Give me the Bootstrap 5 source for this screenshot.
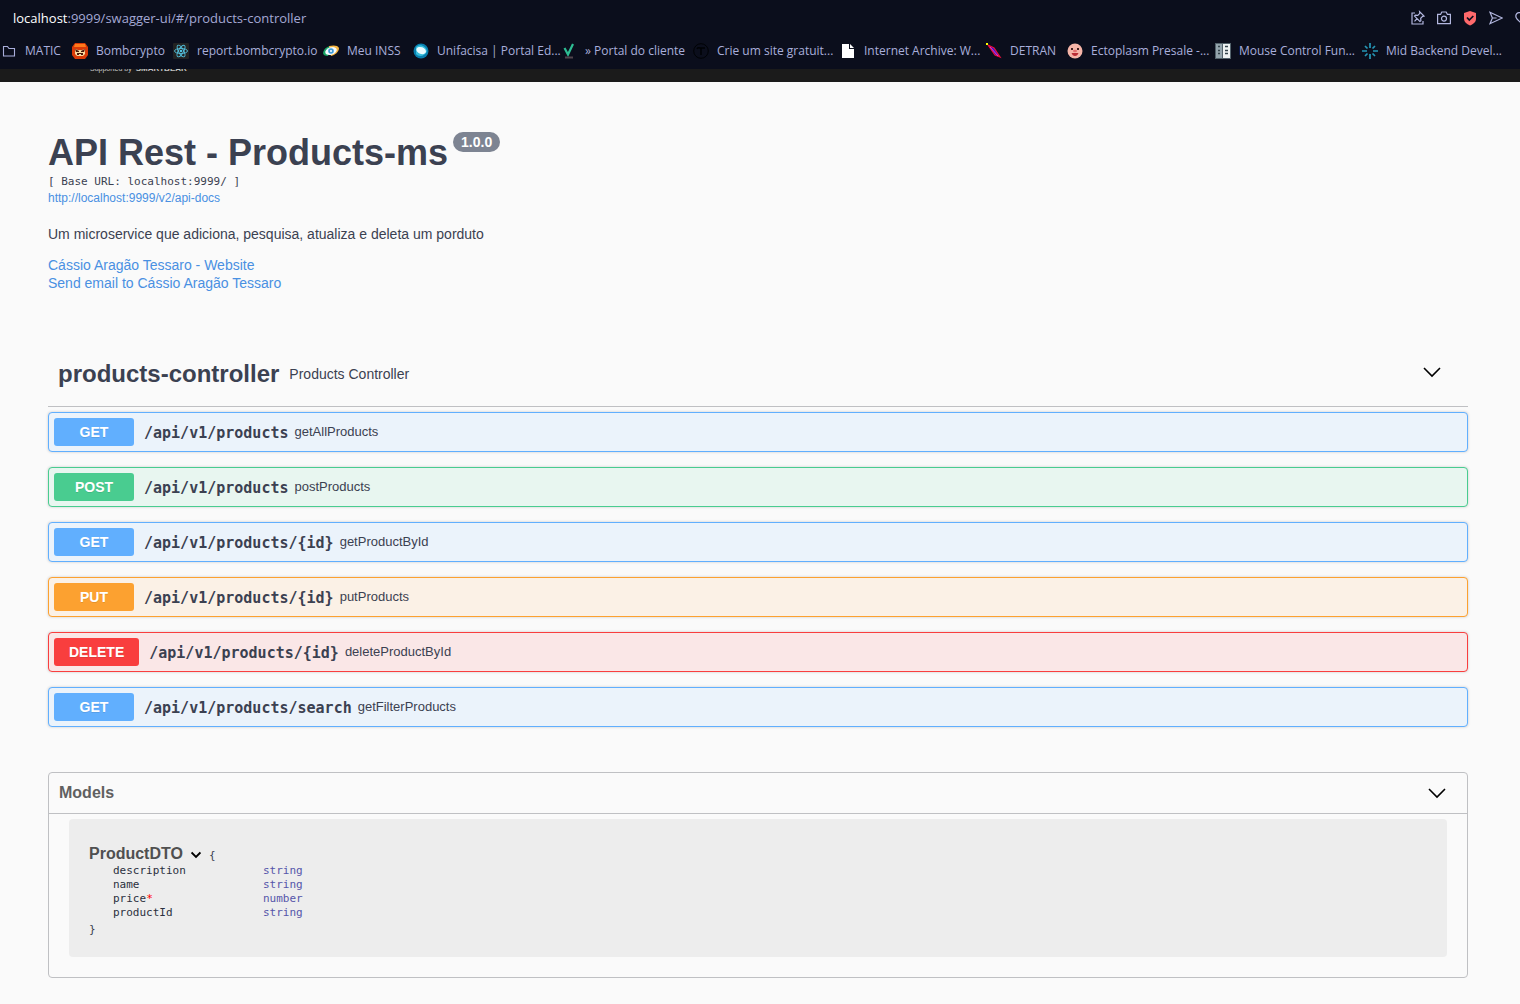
<!DOCTYPE html>
<html lang="pt-BR">
<head>
<meta charset="utf-8">
<meta name="viewport" content="width=device-width, initial-scale=1">
<title>Swagger UI</title>
<link href="https://cdn.jsdelivr.net/npm/bootstrap@5.3.0/dist/css/bootstrap.min.css" rel="stylesheet">
<style>
  body { background: #fafafa; color: #3b4151; font-family: "Liberation Sans", Arial, sans-serif; font-size: 14px; line-height: 18px; }
  a { text-decoration: none; }
  .chrome { background: #0b0e1c; font-family: "Open Sans", "Noto Sans", sans-serif; }
  .address { height: 36px; padding-left: 13px; color: #a4a8d4; font-size: 13px; overflow: hidden; }
  .address strong { color: #fff; font-weight: 400; }
  .tools { gap: 12px; width: 109px; overflow: hidden; }
  .tools button { width: 14px; height: 18px; padding: 0; border: 0; background: none; color: #b4b8e0; line-height: 0; }
  .tools svg { display: block; width: 14px; height: 18px; }
  .bookmarks { display: grid; grid-template-columns: 71px 101px 150px 90px 148px 132px 147px 146px 81px 148px 147px 1fr; align-items: center; height: 33px; padding: 0 0 3px 1px; }
  .bookmarks a { gap: 8px; color: #a9aedb; font-size: 12px; line-height: 16px; white-space: nowrap; }
  .bookmarks svg { width: 16px; height: 16px; flex: none; }
  .topbar { height: 13px; background: #1b1b1b; color: #c4c4c4; padding-left: 90px; gap: 4px; overflow: hidden; font-size: 7px; line-height: 10px; }
  .topbar span { margin-top: -5px; }
  .topbar .brand { font-size: 8px; font-weight: 700; }
  .page { padding: 50px 52px 26px 48px; }
  h1 { font-size: 36px; line-height: 40px; font-weight: 700; color: #3b4151; margin: 1px 5px 0 0; }
  .version { background: #7d8492; color: #fff; font-size: 14px; font-weight: 700; line-height: 20px; padding: 0 8px; border-radius: 20px; }
  .mono { font-family: "DejaVu Sans Mono", monospace; font-size: 11px; line-height: 14px; }
  .base-url { padding-top: 2px; }
  .info a { color: #4990e2; }
  .info .spec { font-size: 12px; line-height: 18px; }
  .info p { margin: 18px 0 13px; }
  .tag-section { padding-top: 69px; }
  .tag-head { gap: 10px; padding: 0 26px 19px 10px; border-bottom: 1px solid #bfc0c3; }
  .tag-head h2 { font-size: 24px; line-height: 26px; font-weight: 700; }
  .summary { font-size: 13px; }
  .toggle { border: 0; background: none; padding: 0; line-height: 0; color: #000; }
  .ops { padding-top: 5px; gap: 15px; }
  .op { height: 40px; padding: 5px; gap: 6px; border: 1px solid var(--c); background: var(--bg); border-radius: 4px; box-shadow: 0 0 3px rgba(0,0,0,.19); color: #3b4151; text-align: left; }
  .op .verb { min-width: 80px; margin-right: 4px; padding: 0 15px; line-height: 28px; border-radius: 3px; background: var(--c); color: #fff; font-weight: 700; text-align: center; text-shadow: 0 1px 0 rgba(0,0,0,.1); }
  .op .path { font-family: "DejaVu Sans Mono", monospace; font-size: 15px; font-weight: 700; padding-top: 2px; }
  .get { --c: #61affe; --bg: #ebf3fb; }
  .post { --c: #49cc90; --bg: #e8f6f0; }
  .put { --c: #fca130; --bg: #fbf1e6; }
  .delete { --c: #f93e3e; --bg: #fae7e7; }
  .models { margin-top: 45px; border: 1px solid #bfc0c3; border-radius: 4px; padding-bottom: 20px; }
  .models-head { height: 41px; padding: 0 20px 0 10px; border-bottom: 1px solid #bfc0c3; }
  .models h2 { font-size: 16px; line-height: 20px; font-weight: 700; color: #606060; }
  .model { margin: 5px 20px 0; padding: 25px 20px 20px; background: #ededed; border-radius: 4px; }
  .model h3 { font-family: "Liberation Sans", Arial, sans-serif; font-size: 16px; line-height: 20px; font-weight: 700; color: #505050; }
  .model .brace { padding-top: 3px; }
  .model table { margin-left: 24px; }
  .model th { width: 150px; padding: 0; font-weight: 400; color: #2b3040; }
  .model td { padding: 0; color: #55a; }
  .required { color: #f00; }
</style>
<script src="https://cdn.jsdelivr.net/npm/bootstrap@5.3.0/dist/js/bootstrap.bundle.min.js"></script>
</head>
<body>
<header class="chrome">
  <div class="address d-flex align-items-center justify-content-between">
    <div><strong>localhost</strong>:9999/swagger-ui/#/products-controller</div>
    <div class="tools d-flex flex-shrink-0">
      <button type="button" aria-label="Pin page"><svg viewBox="0 0 14 18" fill="none" stroke="currentColor" stroke-width="1.2"><path d="M4 4H1v11h11v-3M8.600 2.600l4.400 4.400-1.300.3-2 2 .2 2.400-1 .8-5.400-5.400.9-1 2.400.2 2-2zM6.200 9.500 3.500 12.300"/></svg></button>
      <button type="button" aria-label="Snapshot"><svg viewBox="0 0 14 18" fill="none" stroke="currentColor" stroke-width="1.200"><path d="M.6 5.400h3L4.800 3h4.400l1.200 2.400h3v9.200H.6z"/><circle cx="7" cy="9.600" r="2.500"/></svg></button>
      <button type="button" aria-label="Blocker"><svg viewBox="0 0 14 18"><path fill="#ff696b" d="M7 2l6 2v6c0 3-2.500 5-6 6.500C3.500 15 1 13 1 10V4z"/><path fill="none" stroke="#0b0e1c" stroke-width="1.700" d="M4 8.500 6.300 11 10.300 7"/></svg></button>
      <button type="button" aria-label="Send"><svg viewBox="0 0 14 18" fill="none" stroke="currentColor" stroke-width="1.200"><path d="M1 3.300 13.300 9 1 14.700 3.400 9zM3.400 9h4.200"/></svg></button>
      <button type="button" aria-label="Favourite" class="flex-shrink-0"><svg viewBox="0 0 14 18" fill="none" stroke="currentColor" stroke-width="1.200"><path d="M7 15 2 10C-1 6 3 1 7 5c4-4 8 1 5 5z"/></svg></button>
    </div>
  </div>
  <nav class="bookmarks" aria-label="Bookmarks">
    <a href="#" class="d-flex align-items-center"><svg viewBox="0 0 16 16" fill="none" stroke="#a9aedb" stroke-width="1.100"><path d="M2.500 3.500h4l1.500 2h5.500v7.500h-11z"/></svg>MATIC</a>
    <a href="#" class="d-flex align-items-center"><svg viewBox="0 0 16 16"><path fill="#d93a08" d="M3 0h10l3 4v8l-3 4H3l-3-4V4z"/><path fill="#ff7a1b" d="M3 1h10l1 3H2z"/><path fill="#f8d9a0" d="M3 6l3 1h4l3-1v5l-2 2H5l-2-2z"/><path fill="#4a1608" d="M3 6l4 2v1H4zM13 6 9 8v1h3zM5 10h6v2H9v-1H7v1H5z"/></svg>Bombcrypto</a>
    <a href="#" class="d-flex align-items-center"><svg viewBox="0 0 16 16"><rect width="16" height="16" rx="1" fill="#222"/><g fill="none" stroke="#53c1de" stroke-width=".9"><ellipse cx="8" cy="8" rx="6.500" ry="2.500"/><ellipse cx="8" cy="8" rx="6.500" ry="2.500" transform="rotate(60 8 8)"/><ellipse cx="8" cy="8" rx="6.500" ry="2.500" transform="rotate(120 8 8)"/></g><circle cx="8" cy="8" r="1.300" fill="#53c1de"/></svg>report.bombcrypto.io</a>
    <a href="#" class="d-flex align-items-center"><svg viewBox="0 0 16 16"><path fill="#18a565" d="M0 10C1 5 5 3 8 3L5 13C2 13 0 12 0 10z"/><path fill="#f5b642" d="M6 3c4-1 9-1 10 2 0 4-4 7-8 8z"/><ellipse cx="8" cy="8" rx="6" ry="3.600" transform="rotate(-20 8 8)" fill="#f4fbff"/><circle cx="8" cy="8" r="2.800" fill="#3d9bd8"/><circle cx="8" cy="8" r="1" fill="#fff"/></svg>Meu INSS</a>
    <a href="#" class="d-flex align-items-center"><svg viewBox="0 0 16 16"><circle cx="8" cy="8" r="7.500" fill="#087fae"/><path fill="#35bddb" d="M3 4c4-4 10-1 11 4-2 6-9 6-11 3z"/><ellipse cx="8" cy="7.500" rx="5" ry="3.400" fill="#e9fbff" transform="rotate(20 8 8)"/></svg>Unifacisa | Portal Ed...</a>
    <a href="#" class="d-flex align-items-center"><svg viewBox="0 0 16 16"><path fill="none" stroke="#2ebd93" stroke-width="2.200" d="M3.500 5 7 11.500 12 1"/><path stroke="#51454c" stroke-width="2" d="M4 14.500h8"/></svg>» Portal do cliente</a>
    <a href="#" class="d-flex align-items-center"><svg viewBox="0 0 16 16" fill="none" stroke="#000205"><circle cx="8" cy="8" r="7.300"/><path stroke-width="1.500" d="M4 6q1-2 3-1h5M8 5v7"/></svg>Crie um site gratuit...</a>
    <a href="#" class="d-flex align-items-center"><svg viewBox="0 0 16 16"><path fill="#fff" d="M2 1h7v5h5v9H2zM10 1l4 4h-4z"/></svg>Internet Archive: W...</a>
    <a href="#" class="d-flex align-items-center"><svg viewBox="0 0 16 16"><path fill="#2b18d8" stroke="#f10d3c" stroke-width="1.200" d="M2 2 8 5l6 9-5-2z"/><path stroke="#e63bd0" d="M4 4l8 9"/><path fill="#ff0" d="M0 0h2v2H0z"/></svg>DETRAN</a>
    <a href="#" class="d-flex align-items-center"><svg viewBox="0 0 16 16"><circle cx="8" cy="8" r="7.500" fill="#f6b5a8"/><path fill="#44201f" d="M4 5h2v2H4zM10 5h2v2h-2z"/><ellipse cx="8" cy="8" rx="2" ry="1.300" fill="#e26e6e"/><path fill="#b92c35" d="M4.500 10h7q-1 3-3.500 3t-3.500-3z"/></svg>Ectoplasm Presale -...</a>
    <a href="#" class="d-flex align-items-center"><svg viewBox="0 0 16 16"><path fill="#53626b" d="M0 0h16v16H0z"/><path fill="#94a4ad" d="M1 1h6v14H1z"/><path fill="#eef2f3" d="M8 1h7v14H8z"/><path stroke="#34434b" stroke-width="1.500" d="M3 3.500h2M3 7.500h2M3 10.500h2M10 3.500h3M10 7.500h3M10 10.500h3"/></svg>Mouse Control Fun...</a>
    <a href="#" class="d-flex align-items-center"><svg viewBox="0 0 16 16" stroke="#2596b5" stroke-width="1.700"><path d="M8 0v5M8 11v5M0 8h5M11 8h5M3 3l2.500 2.500M10.500 10.500 13 13M13 3l-2.500 2.500M5.500 10.500 3 13"/></svg>Mid Backend Devel...</a>
  </nav>
</header>
<div class="topbar d-flex align-items-start"><span>Supported by</span><span class="brand">SMARTBEAR</span></div>

<main class="page">
  <section class="info">
    <div class="d-flex align-items-start"><h1>API Rest - Products-ms</h1><span class="version">1.0.0</span></div>
    <div class="mono base-url">[ Base URL: localhost:9999/ ]</div>
    <a class="spec d-block" href="#">http://localhost:9999/v2/api-docs</a>
    <p>Um microservice que adiciona, pesquisa, atualiza e deleta um porduto</p>
    <a class="d-block" href="#">Cássio Aragão Tessaro - Website</a>
    <a class="d-block" href="#">Send email to Cássio Aragão Tessaro</a>
  </section>

  <section class="tag-section">
    <div class="tag-head d-flex align-items-center">
      <h2 class="mb-0">products-controller</h2>
      <span class="flex-grow-1">Products Controller</span>
      <button class="toggle" type="button" aria-label="Collapse products-controller"><svg width="20" height="20" viewBox="0 0 20 20" fill="none" stroke="currentColor" stroke-width="1.600"><path d="M2 4l8 8 8-8"/></svg></button>
    </div>
    <div class="ops d-flex flex-column">
      <button type="button" class="op get d-flex align-items-center"><span class="verb">GET</span><span class="path">/api/v1/products</span><span class="summary">getAllProducts</span></button>
      <button type="button" class="op post d-flex align-items-center"><span class="verb">POST</span><span class="path">/api/v1/products</span><span class="summary">postProducts</span></button>
      <button type="button" class="op get d-flex align-items-center"><span class="verb">GET</span><span class="path">/api/v1/products/{id}</span><span class="summary">getProductById</span></button>
      <button type="button" class="op put d-flex align-items-center"><span class="verb">PUT</span><span class="path">/api/v1/products/{id}</span><span class="summary">putProducts</span></button>
      <button type="button" class="op delete d-flex align-items-center"><span class="verb">DELETE</span><span class="path">/api/v1/products/{id}</span><span class="summary">deleteProductById</span></button>
      <button type="button" class="op get d-flex align-items-center"><span class="verb">GET</span><span class="path">/api/v1/products/search</span><span class="summary">getFilterProducts</span></button>
    </div>
  </section>

  <section class="models">
    <div class="models-head d-flex align-items-center justify-content-between">
      <h2 class="mb-0">Models</h2>
      <button class="toggle" type="button" aria-label="Collapse models"><svg width="20" height="20" viewBox="0 0 20 20" fill="none" stroke="currentColor" stroke-width="1.600"><path d="M2 6l8 8 8-8"/></svg></button>
    </div>
    <div class="model mono">
      <div class="d-flex align-items-center">
        <h3 class="mb-0">ProductDTO</h3>
        <button class="toggle ms-2 me-2" type="button" aria-label="Collapse ProductDTO"><svg width="10" height="12" viewBox="0 0 10 12" fill="none" stroke="currentColor" stroke-width="1.800"><path d="M.6 4.500 5 9l4.400-4.500"/></svg></button>
        <span class="brace">{</span>
      </div>
      <table>
        <tr><th scope="row">description</th><td>string</td></tr>
        <tr><th scope="row">name</th><td>string</td></tr>
        <tr><th scope="row">price<span class="required">*</span></th><td>number</td></tr>
        <tr><th scope="row">productId</th><td>string</td></tr>
      </table>
      <div class="brace">}</div>
    </div>
  </section>
</main>
</body>
</html>
